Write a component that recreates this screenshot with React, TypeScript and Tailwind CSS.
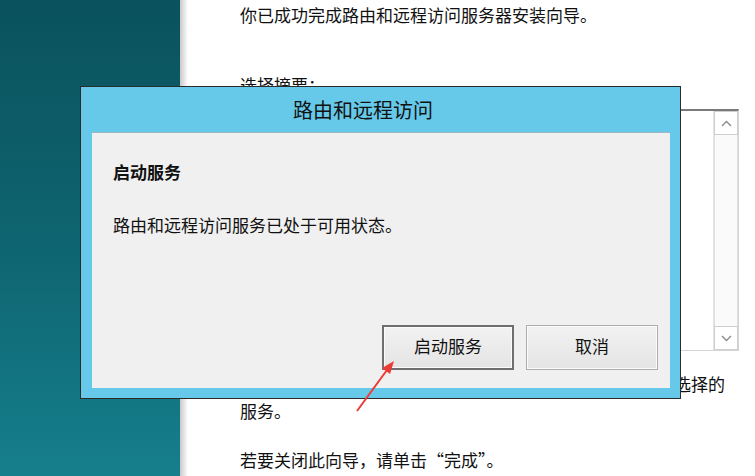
import React from 'react';

const font = { fontFamily: '"Noto Sans CJK SC", "Noto Sans", sans-serif' };

function ListBox() {
  return (
    <div className="flex h-[242px] w-[499px] border border-[#d4d4d4] border-t-2 border-t-[#7a7a7a] bg-white">
      <div className="flex-1" />
      <div className="flex w-[25px] flex-col border-l border-[#e3e3e3] bg-[#fafafa]">
        <div className="flex h-[24px] items-center justify-center border border-[#cfcfcf] bg-white">
          <svg width="11" height="7" viewBox="0 0 11 7" fill="none">
            <path d="M1 6 L5.5 1.5 L10 6" stroke="#8a8a8a" strokeWidth="1.4" />
          </svg>
        </div>
        <div className="flex-1 border-x border-[#dedede]" />
        <div className="flex h-[24px] items-center justify-center border border-[#cfcfcf] bg-white">
          <svg width="11" height="7" viewBox="0 0 11 7" fill="none">
            <path d="M1 1 L5.5 5.5 L10 1" stroke="#8a8a8a" strokeWidth="1.4" />
          </svg>
        </div>
      </div>
    </div>
  );
}

export default function App() {
  return (
    <div className="relative flex h-[476px] w-[755px] overflow-hidden" style={font}>
      {/* desktop */}
      <div className="h-full w-[180px] bg-gradient-to-b from-[#0a525d] via-[#0e6470] to-[#167f8c]" />

      {/* wizard window */}
      <div className="flex h-full flex-1 bg-white">
        <div className="h-full w-[8px] bg-gradient-to-r from-[#c9c9c9] to-white" />
        <div className="flex flex-1 flex-col pl-[52px] text-[17px] leading-[24px] text-[#111]">
          <div className="mt-[3px]">你已成功完成路由和远程访问服务器安装向导。</div>
          <div className="mt-[46px]">选择摘要：</div>
          <div className="mt-[12px]">
            <ListBox />
          </div>
          <div className="mt-[21px] w-[485px] whitespace-nowrap text-right">关闭此向导后，在路由和远程访问控制台中配置选择的</div>
          <div className="mt-[3px]">服务。</div>
          <div className="mt-[25px]">若要关闭此向导，请单击“完成”。</div>
        </div>
      </div>

      {/* dialog */}
      <div className="absolute left-[80px] top-[86px] flex h-[313px] w-[601px] flex-col border border-[#2b2b2b] bg-[#66c9ea] pb-[10px] pl-[11px] pr-[10px]">
        <div className="flex h-[45px] shrink-0 items-center justify-center pr-[36px] text-[20px] text-[#111]">
          路由和远程访问
        </div>
        <div className="flex flex-1 flex-col border-t border-[#9fb7c4] bg-[#f0f0f0] pl-[21px] pr-[12px] text-[17px] leading-[24px] text-[#111]">
          <div className="mt-[27px] font-bold">启动服务</div>
          <div className="mt-[29px]">路由和远程访问服务已处于可用状态。</div>
          <div className="mb-[18px] mt-auto flex justify-end gap-[12px]">
            <button className="flex h-[45px] w-[132px] items-center justify-center border-2 border-[#6f6f6f] bg-gradient-to-b from-[#f2f2f2] to-[#e4e4e4] pb-[3px] text-[17px] text-[#111] shadow-[inset_0_0_0_1px_#fbfbfb]">
              启动服务
            </button>
            <button className="flex h-[45px] w-[132px] items-center justify-center border border-[#adadad] bg-gradient-to-b from-[#f2f2f2] to-[#e4e4e4] pb-[3px] text-[17px] text-[#111] shadow-[inset_0_0_0_1px_#fbfbfb]">
              取消
            </button>
          </div>
        </div>
      </div>

      {/* annotation arrow */}
      <svg className="pointer-events-none absolute left-0 top-0" width="755" height="476">
        <line x1="357" y1="411" x2="387" y2="370" stroke="#ea3b35" strokeWidth="2" />
        <polygon points="394,361 382,368 390,374" fill="#ea3b35" />
      </svg>
    </div>
  );
}
